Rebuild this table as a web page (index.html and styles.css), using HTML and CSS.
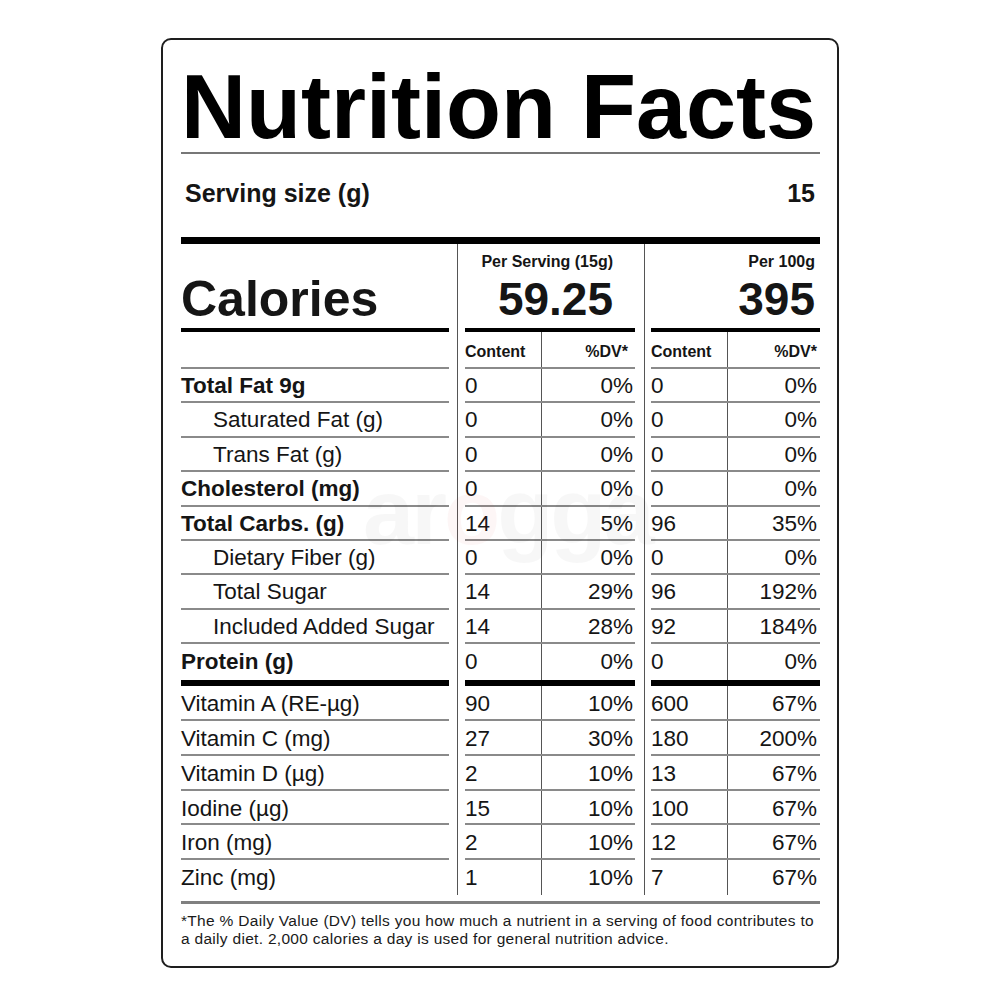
FILE: index.html
```html
<!DOCTYPE html>
<html>
<head>
    <title>Nutrition Facts</title>
    <link rel="stylesheet" href="styles.css">
</head>
<body>
<div class="label">
    <div class="watermark">ar<span class="wm-o">o</span>gga</div>
    <h1 class="title">Nutrition Facts</h1>
    <div class="serving">
        <span>Serving size (g)</span>
        <span>15</span>
    </div>

    <div class="row">
        <div class="name cal-name">Calories</div>
        <div class="grp">
            <div class="cal">
                <div class="cal-head">Per Serving (15g)</div>
                <div class="cal-num">59.25</div>
            </div>
        </div>
        <div class="grp grp2">
            <div class="cal cal2">
                <div class="cal-head">Per 100g</div>
                <div class="cal-num">395</div>
            </div>
        </div>
    </div>

    <div class="row head-row">
        <div class="name"></div>
        <div class="grp">
            <div class="cells"><span class="amt">Content</span><span class="dv">%DV*</span></div>
        </div>
        <div class="grp grp2">
            <div class="cells"><span class="amt">Content</span><span class="dv">%DV*</span></div>
        </div>
    </div>

    <div class="row bold">
        <div class="name">Total Fat 9g</div>
        <div class="grp"><div class="cells"><span class="amt">0</span><span class="dv">0%</span></div></div>
        <div class="grp grp2"><div class="cells"><span class="amt">0</span><span class="dv">0%</span></div></div>
    </div>
    <div class="row">
        <div class="name sub">Saturated Fat (g)</div>
        <div class="grp"><div class="cells"><span class="amt">0</span><span class="dv">0%</span></div></div>
        <div class="grp grp2"><div class="cells"><span class="amt">0</span><span class="dv">0%</span></div></div>
    </div>
    <div class="row">
        <div class="name sub">Trans Fat (g)</div>
        <div class="grp"><div class="cells"><span class="amt">0</span><span class="dv">0%</span></div></div>
        <div class="grp grp2"><div class="cells"><span class="amt">0</span><span class="dv">0%</span></div></div>
    </div>
    <div class="row bold">
        <div class="name">Cholesterol (mg)</div>
        <div class="grp"><div class="cells"><span class="amt">0</span><span class="dv">0%</span></div></div>
        <div class="grp grp2"><div class="cells"><span class="amt">0</span><span class="dv">0%</span></div></div>
    </div>
    <div class="row bold">
        <div class="name">Total Carbs. (g)</div>
        <div class="grp"><div class="cells"><span class="amt">14</span><span class="dv">5%</span></div></div>
        <div class="grp grp2"><div class="cells"><span class="amt">96</span><span class="dv">35%</span></div></div>
    </div>
    <div class="row">
        <div class="name sub">Dietary Fiber (g)</div>
        <div class="grp"><div class="cells"><span class="amt">0</span><span class="dv">0%</span></div></div>
        <div class="grp grp2"><div class="cells"><span class="amt">0</span><span class="dv">0%</span></div></div>
    </div>
    <div class="row">
        <div class="name sub">Total Sugar</div>
        <div class="grp"><div class="cells"><span class="amt">14</span><span class="dv">29%</span></div></div>
        <div class="grp grp2"><div class="cells"><span class="amt">96</span><span class="dv">192%</span></div></div>
    </div>
    <div class="row">
        <div class="name sub">Included Added Sugar</div>
        <div class="grp"><div class="cells"><span class="amt">14</span><span class="dv">28%</span></div></div>
        <div class="grp grp2"><div class="cells"><span class="amt">92</span><span class="dv">184%</span></div></div>
    </div>
    <div class="row bold thick">
        <div class="name">Protein (g)</div>
        <div class="grp"><div class="cells"><span class="amt">0</span><span class="dv">0%</span></div></div>
        <div class="grp grp2"><div class="cells"><span class="amt">0</span><span class="dv">0%</span></div></div>
    </div>
    <div class="row vit">
        <div class="name">Vitamin A (RE-µg)</div>
        <div class="grp"><div class="cells"><span class="amt">90</span><span class="dv">10%</span></div></div>
        <div class="grp grp2"><div class="cells"><span class="amt">600</span><span class="dv">67%</span></div></div>
    </div>
    <div class="row vit">
        <div class="name">Vitamin C (mg)</div>
        <div class="grp"><div class="cells"><span class="amt">27</span><span class="dv">30%</span></div></div>
        <div class="grp grp2"><div class="cells"><span class="amt">180</span><span class="dv">200%</span></div></div>
    </div>
    <div class="row vit">
        <div class="name">Vitamin D (µg)</div>
        <div class="grp"><div class="cells"><span class="amt">2</span><span class="dv">10%</span></div></div>
        <div class="grp grp2"><div class="cells"><span class="amt">13</span><span class="dv">67%</span></div></div>
    </div>
    <div class="row vit">
        <div class="name">Iodine (µg)</div>
        <div class="grp"><div class="cells"><span class="amt">15</span><span class="dv">10%</span></div></div>
        <div class="grp grp2"><div class="cells"><span class="amt">100</span><span class="dv">67%</span></div></div>
    </div>
    <div class="row vit">
        <div class="name">Iron (mg)</div>
        <div class="grp"><div class="cells"><span class="amt">2</span><span class="dv">10%</span></div></div>
        <div class="grp grp2"><div class="cells"><span class="amt">12</span><span class="dv">67%</span></div></div>
    </div>
    <div class="row vit last">
        <div class="name">Zinc (mg)</div>
        <div class="grp"><div class="cells"><span class="amt">1</span><span class="dv">10%</span></div></div>
        <div class="grp grp2"><div class="cells"><span class="amt">7</span><span class="dv">67%</span></div></div>
    </div>

    <p class="note">*The % Daily Value (DV) tells you how much a nutrient in a serving of food contributes to<br>a daily diet. 2,000 calories a day is used for general nutrition advice.</p>
</div>
</body>
</html>
```

FILE: styles.css
```css
body {
  margin: 0;
  background: #fff;
  font-family: "Liberation Sans", Arial, sans-serif;
  color: #151515;
}

.label {
  position: relative;
  box-sizing: border-box;
  width: 678px;
  margin: 38px 0 0 161px;
  padding: 22px 17px 18px 18px;
  border: 2px solid #1e1e1e;
  border-radius: 10px;
}

/* faint shop watermark over the table */
.watermark {
  position: absolute;
  left: 200px;
  top: 420px;
  font-size: 92px;
  font-weight: bold;
  letter-spacing: -3px;
  color: rgba(0, 0, 0, 0.03);
  pointer-events: none;
}

.wm-o {
  color: rgba(220, 40, 40, 0.045);
}

.title {
  margin: 0;
  font-size: 90px;
  line-height: 90px;
  font-weight: bold;
  color: #000;
  border-bottom: 2px solid #777;
}

.serving {
  display: flex;
  justify-content: space-between;
  padding: 27px 5px 31px 4px;
  font-size: 25px;
  line-height: 25px;
  font-weight: bold;
  border-bottom: 7px solid #000;
}

.row {
  display: flex;
  font-size: 22.5px;
  line-height: 22px;
}

.name {
  box-sizing: border-box;
  width: 268px;
  height: 34.4px;
  padding-top: 6px;
  border-bottom: 2px solid #8a8a8a;
}

.sub {
  padding-left: 32px;
}

.bold {
  font-weight: bold;
}

.grp {
  width: 170px;
  margin-left: 8px;
  padding-left: 7px;
  border-left: 1px solid #555;
}

.grp2 {
  width: 169px;
  margin-left: 9px;
  padding-left: 6px;
}

.cells {
  box-sizing: border-box;
  display: flex;
  height: 34.4px;
  border-bottom: 2px solid #8a8a8a;
}

.amt {
  box-sizing: border-box;
  width: 77px;
  padding-top: 6px;
  border-right: 1px solid #555;
  font-weight: normal;
}

.dv {
  flex: 1;
  padding-top: 6px;
  padding-right: 2px;
  text-align: right;
  font-weight: normal;
}

.grp2 .dv {
  padding-right: 3px;
}

.cal-name {
  height: 88px;
  padding-top: 30px;
  font-size: 50px;
  line-height: 50px;
  font-weight: bold;
  border-bottom: 4px solid #000;
}

.cal {
  box-sizing: border-box;
  height: 88px;
  padding: 9.5px 22px 0 0;
  text-align: right;
  font-weight: bold;
  border-bottom: 4px solid #000;
}

.cal2 {
  padding-right: 5px;
}

.cal-head {
  font-size: 16px;
  line-height: 16px;
}

.cal-num {
  margin-top: 6.5px;
  font-size: 46px;
  line-height: 46px;
}

.head-row .name,
.head-row .cells {
  height: 37px;
}

.head-row .amt,
.head-row .dv {
  padding-top: 12px;
  font-size: 16px;
  line-height: 16px;
  font-weight: bold;
}

.head-row .dv {
  padding-right: 7px;
}

.head-row .grp2 .dv {
  padding-right: 3px;
}

.thick .name,
.thick .cells {
  height: 42px;
  border-bottom: 6px solid #000;
}

.thick .name,
.thick .amt,
.thick .dv {
  padding-top: 7px;
}

.vit .name,
.vit .cells {
  height: 34.8px;
}

.vit .name,
.vit .amt,
.vit .dv {
  padding-top: 7px;
}

.last .name,
.last .cells {
  height: 35px;
  border-bottom: none;
}

.note {
  margin: 6px 0 0;
  padding-top: 8px;
  border-top: 3px solid #808080;
  font-size: 15.5px;
  line-height: 18px;
  letter-spacing: 0.3px;
  color: #1a1a1a;
}
```
